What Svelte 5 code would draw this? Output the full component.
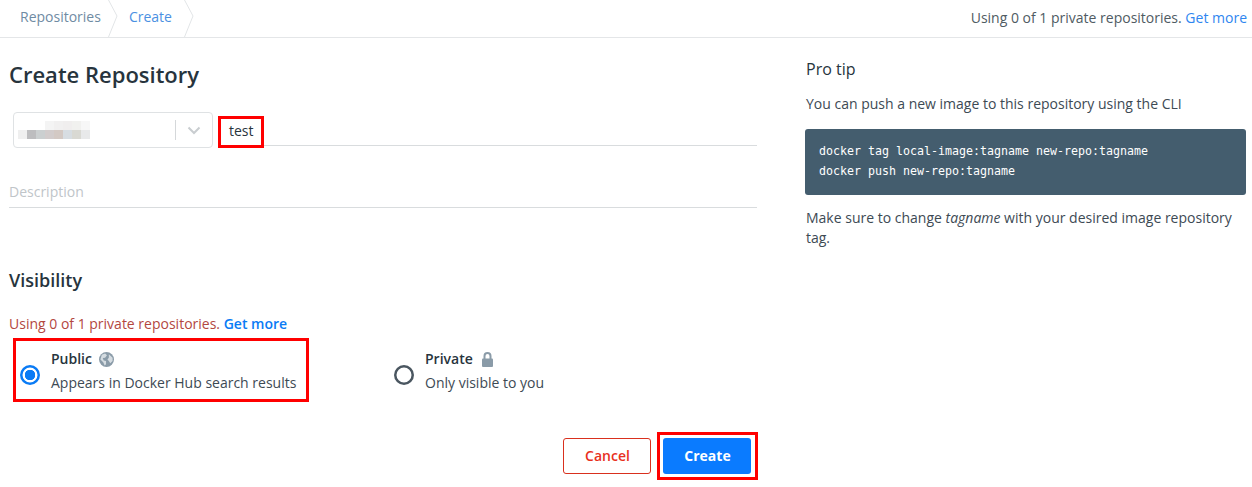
<script>
  const blurTop = ['#fff', '#fff', '#fff', '#f4f4f4', '#f1f0f0', '#f0eeee', '#f1f1ef', '#f7f7f7']
  const blurBottom = ['#efefef', '#bdbdbf', '#cbcfd0', '#d2cccc', '#d3c9c4', '#d7dde2', '#d9d9d3', '#e8e9ea']
</script>

<div class="page">
  <header class="topbar">
    <nav class="crumbs">
      <a class="crumb first">Repositories</a>
      <svg class="chev" width="12" height="37" viewBox="0 0 12 37"><path d="M0.5 0 L9 16 L0.5 37" fill="none" stroke="#e2e5e7" /></svg>
      <a class="crumb current">Create</a>
      <svg class="chev" width="12" height="37" viewBox="0 0 12 37"><path d="M0.5 0 L9 16 L0.5 37" fill="none" stroke="#e2e5e7" /></svg>
    </nav>
    <div class="usage">Using 0 of 1 private repositories. <a class="link">Get more</a></div>
  </header>

  <div class="content">
    <main class="form">
      <h1>Create Repository</h1>

      <div class="name-row">
        <div class="select">
          <div class="blur">
            <div class="blur-row">
              {#each blurTop as c}<i style="background:{c}"></i>{/each}
            </div>
            <div class="blur-row">
              {#each blurBottom as c}<i style="background:{c}"></i>{/each}
            </div>
          </div>
          <span class="sep"></span>
          <svg class="caret" width="14" height="9" viewBox="0 0 14 9"><path d="M1.5 1.5 L7 7 L12.5 1.5" fill="none" stroke="#c9cdd0" stroke-width="2" /></svg>
        </div>
        <div class="name-input">
          <span class="mark test">test</span>
        </div>
      </div>

      <div class="description">Description</div>

      <h2>Visibility</h2>
      <p class="warn">Using 0 of 1 private repositories. <a class="link strong">Get more</a></p>

      <div class="options">
        <div class="option public">
          <span class="radio on"></span>
          <div>
            <div class="opt-title">
              Public
              <svg class="globe" width="15" height="15" viewBox="0 0 16 16"><circle cx="8" cy="8" r="8" fill="#8a9ba8" /><path d="M3 3 L6.5 1.5 L8.5 3.5 L6.5 6 L4 6.5 L5 9 L7.5 9.5 L7.5 13 L6 14.5 L4.5 11 L1.5 8 Z M10.5 2.5 L14.5 6 L14.5 9.5 L12 12 L10.5 9.5 L9 8 L10.5 6 Z" fill="#d5dce1" /></svg>
            </div>
            <div class="opt-sub">Appears in Docker Hub search results</div>
          </div>
        </div>
        <div class="option private">
          <span class="radio"></span>
          <div>
            <div class="opt-title">
              Private
              <svg class="lock" width="11" height="15" viewBox="0 0 11 15"><path d="M2.5 7 V4 a3 3 0 0 1 6 0 V7" fill="none" stroke="#8a9ba8" stroke-width="2" /><rect x="0" y="6.5" width="11" height="8.5" rx="1" fill="#8a9ba8" /></svg>
            </div>
            <div class="opt-sub">Only visible to you</div>
          </div>
        </div>
      </div>

      <div class="actions">
        <button class="btn cancel">Cancel</button>
        <span class="mark btn-mark"><button class="btn create">Create</button></span>
      </div>
    </main>

    <aside class="tip">
      <h3>Pro tip</h3>
      <p class="tip-line">You can push a new image to this repository using the CLI</p>
      <pre class="code">docker tag local-image:tagname new-repo:tagname
docker push new-repo:tagname</pre>
      <p class="tip-note">Make sure to change <em>tagname</em> with your desired image repository tag.</p>
    </aside>
  </div>
</div>

<style>
  :global(body) {
    margin: 0;
    background: #fff;
  }

  .page {
    width: 1252px;
    height: 487px;
    overflow: hidden;
    font-family: "Open Sans", "Noto Sans", sans-serif;
    font-size: 14px;
    color: #27343d;
  }

  .topbar {
    display: flex;
    justify-content: space-between;
    align-items: center;
    height: 37px;
    border-bottom: 1px solid #e4e6e8;
    padding-right: 5px;
  }

  .crumbs {
    display: flex;
    align-items: center;
    height: 37px;
  }

  .crumb {
    font-size: 14px;
    line-height: 34px;
    height: 37px;
  }

  .first {
    color: #6f8ba3;
    margin-left: 20px;
    margin-right: 7px;
  }

  .current {
    color: #4a90e2;
    margin-left: 9px;
    margin-right: 12px;
  }

  .chev {
    display: block;
    flex: none;
  }

  .usage {
    font-size: 14px;
    color: #4f5b63;
    margin-top: -3px;
  }

  .link {
    color: #2f86f0;
  }

  .strong {
    color: #0a7bf5;
    font-weight: 600;
  }

  .content {
    display: flex;
  }

  .form {
    width: 748px;
    margin-left: 9px;
    flex: none;
  }

  h1 {
    margin: 21px 0 0;
    font-size: 22px;
    line-height: 30px;
    font-weight: 600;
    color: #27343d;
  }

  .name-row {
    display: flex;
    align-items: flex-end;
    margin-top: 23px;
    padding-left: 4px;
  }

  .select {
    width: 200px;
    height: 36px;
    box-sizing: border-box;
    border: 1px solid #dfe2e4;
    border-radius: 4px;
    display: flex;
    align-items: center;
    padding-left: 4px;
    flex: none;
  }

  .blur {
    width: 72px;
  }

  .blur-row {
    display: flex;
    height: 9px;
  }

  .blur-row i {
    width: 9px;
    height: 9px;
    display: block;
  }

  .sep {
    width: 1px;
    height: 20px;
    background: #d5d8da;
    margin-left: 85px;
  }

  .caret {
    margin-left: 11px;
  }

  .name-input {
    flex: 1;
    margin-left: 5px;
    border-bottom: 1px solid #d9dcde;
    height: 33px;
    box-sizing: border-box;
    margin-bottom: 2px;
  }

  .mark {
    border: 3px solid #f00;
    box-sizing: border-box;
    display: inline-block;
  }

  .test {
    width: 46px;
    height: 32px;
    margin-top: 3px;
    padding-left: 8px;
    line-height: 23px;
    font-size: 14px;
    color: #27343d;
    vertical-align: top;
  }

  .description {
    margin-top: 24px;
    height: 35px;
    line-height: 39px;
    box-sizing: content-box;
    border-bottom: 1px solid #d9dcde;
    color: #c0c5c9;
    font-size: 14px;
  }

  h2 {
    margin: 60px 0 0;
    font-size: 18px;
    line-height: 24px;
    font-weight: 600;
    color: #27343d;
  }

  .warn {
    margin: 22px 0 0;
    font-size: 14px;
    line-height: 20px;
    color: #b3473f;
  }

  .options {
    display: flex;
    margin-top: 4px;
    margin-left: 4px;
  }

  .option {
    display: flex;
    align-items: center;
    box-sizing: border-box;
  }

  .public {
    width: 296px;
    height: 64px;
    border: 3px solid #f00;
    padding-left: 4px;
    padding-top: 2px;
  }

  .private {
    margin-left: 85px;
    height: 64px;
    padding-top: 2px;
  }

  .radio {
    width: 20px;
    height: 20px;
    box-sizing: border-box;
    border-radius: 50%;
    box-shadow: inset 0 0 0 2.5px #4a5660;
    flex: none;
    margin-right: 11px;
    margin-top: 8px;
    background: #fff;
  }

  .radio.on {
    box-shadow: inset 0 0 0 2.5px #0a7bf5;
    background: radial-gradient(circle, #0a7bf5 0 5px, #fff 5.5px);
  }

  .opt-title {
    display: flex;
    align-items: center;
    font-size: 14px;
    font-weight: 600;
    line-height: 24px;
    color: #27343d;
  }

  .globe {
    margin-left: 7px;
  }

  .lock {
    margin-left: 9px;
  }

  .opt-sub {
    font-size: 14px;
    line-height: 24px;
    color: #3d4a54;
  }

  .actions {
    display: flex;
    justify-content: flex-end;
    align-items: center;
    margin-top: 30px;
    margin-right: -1px;
  }

  .btn {
    font-family: inherit;
    font-size: 14px;
    font-weight: 600;
    width: 88px;
    height: 36px;
    border-radius: 3px;
    box-sizing: border-box;
    cursor: pointer;
    padding: 0 0 1px 1px;
  }

  .cancel {
    background: #fff;
    color: #e8301e;
    border: 1px solid #d9301e;
    margin-right: 6px;
  }

  .create {
    background: #0a7bff;
    color: #fff;
    border: none;
    display: block;
    font-weight: 700;
  }

  .btn-mark {
    padding: 3px 4px 3px 3px;
  }

  .tip {
    margin-left: 48px;
    width: 441px;
    flex: none;
  }

  h3 {
    margin: 20px 0 0;
    padding-left: 1px;
    font-size: 16px;
    line-height: 22px;
    font-weight: 400;
    color: #27343d;
  }

  .tip-line {
    margin: 14px 0 0;
    padding-left: 1px;
    line-height: 20px;
    color: #3d4a54;
  }

  .code {
    margin: 15px 0 0;
    height: 66px;
    box-sizing: border-box;
    background: #445d6e;
    border-radius: 3px;
    padding: 12px 14px;
    color: #fff;
    font-family: "DejaVu Sans Mono", monospace;
    font-size: 11.63px;
    line-height: 20px;
  }

  .tip-note {
    margin: 13px 0 0;
    padding-left: 1px;
    line-height: 20px;
    color: #3d4a54;
  }
</style>
